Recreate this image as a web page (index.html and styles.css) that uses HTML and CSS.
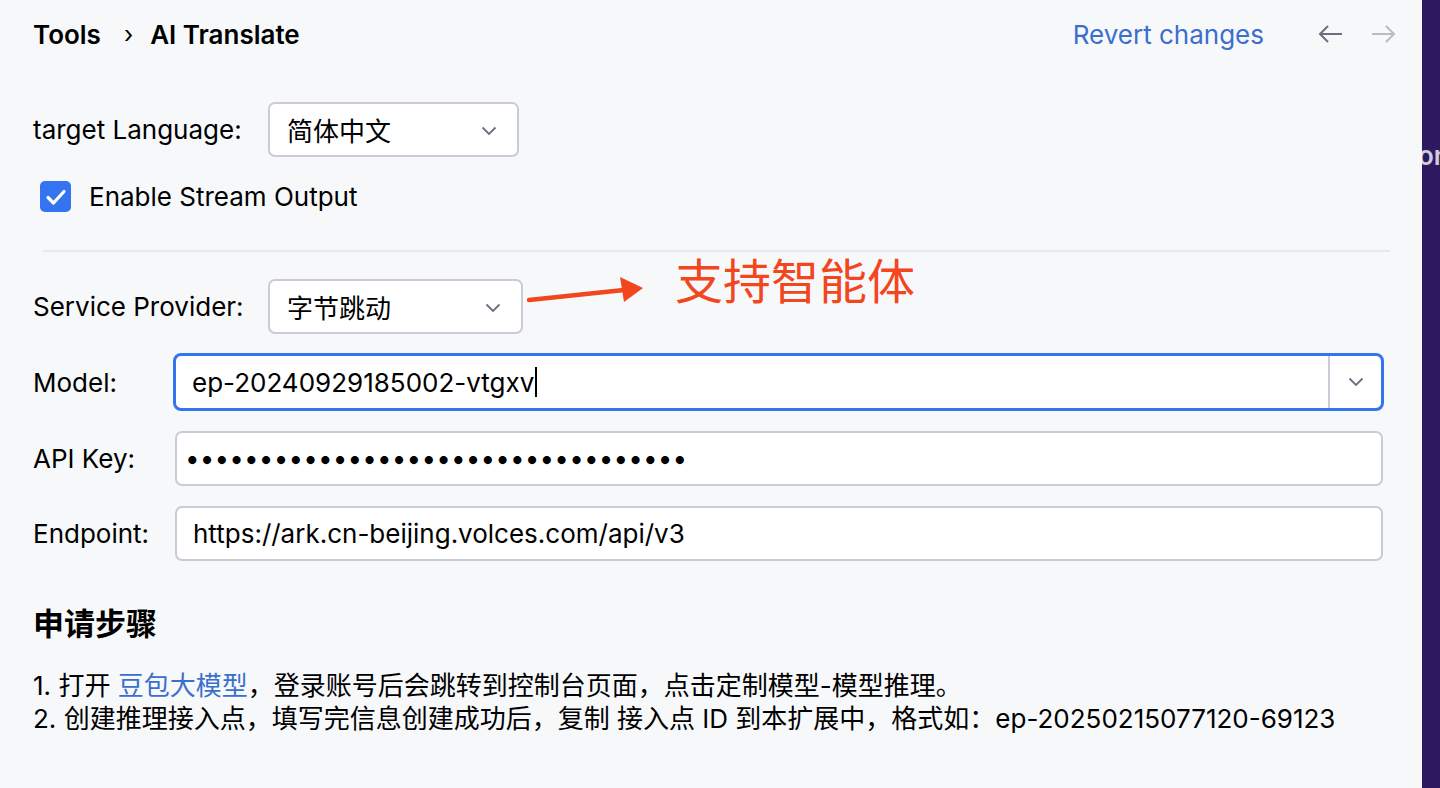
FILE: index.html
```html
<!DOCTYPE html>
<html lang="zh">
<head>
<meta charset="utf-8">
<title>AI Translate</title>
<link rel="stylesheet" href="styles.css">
</head>
<body>
<div class="app">
  <main class="panel">
    <header class="header">
      <nav class="crumbs">
        <span class="crumb">Tools</span>
        <span class="crumb-sep">›</span>
        <span class="crumb">AI Translate</span>
      </nav>
      <div class="header-right">
        <a class="revert">Revert changes</a>
        <svg class="nav-arrow" width="26" height="20" viewBox="0 0 26 20"><path d="M24 10H2M10 2L2 10l8 8" fill="none" stroke="#6c707e" stroke-width="2"/></svg>
        <svg class="nav-arrow" width="26" height="20" viewBox="0 0 26 20"><path d="M2 10h22M16 2l8 8-8 8" fill="none" stroke="#b9bcc3" stroke-width="2"/></svg>
      </div>
    </header>

    <section class="group">
      <div class="row row-lang">
        <label class="label label-wide">target Language:</label>
        <div class="select select-lang">
          <span>简体中文</span>
          <svg class="chev" width="16" height="10" viewBox="0 0 16 10"><path d="M1.5 1.5l6.5 6.5 6.5-6.5" fill="none" stroke="#6c707e" stroke-width="1.8"/></svg>
        </div>
      </div>
      <div class="row row-check">
        <span class="checkbox"><svg width="22" height="18" viewBox="0 0 22 18"><path d="M3 9.5l5.5 5.5L19 3.5" fill="none" stroke="#fff" stroke-width="3.2" stroke-linecap="round" stroke-linejoin="round"/></svg></span>
        <span class="check-label">Enable Stream Output</span>
      </div>
    </section>

    <hr class="sep">

    <section class="group">
      <div class="row row-provider">
        <label class="label label-wide">Service Provider:</label>
        <div class="select select-provider">
          <span>字节跳动</span>
          <svg class="chev" width="16" height="10" viewBox="0 0 16 10"><path d="M1.5 1.5l6.5 6.5 6.5-6.5" fill="none" stroke="#6c707e" stroke-width="1.8"/></svg>
        </div>
        <div class="note">
          <svg class="note-arrow" width="120" height="30" viewBox="0 0 120 30"><path d="M3 25L98 15" stroke="#f2461f" stroke-width="4.5" stroke-linecap="round"/><path d="M94 2L117 13 98 27z" fill="#f2461f"/></svg>
          <span class="note-text">支持智能体</span>
        </div>
      </div>
      <div class="row row-model">
        <label class="label label-narrow">Model:</label>
        <div class="combo">
          <span class="combo-value">ep-20240929185002-vtgxv<span class="caret"></span></span>
          <span class="combo-btn"><svg width="16" height="10" viewBox="0 0 16 10"><path d="M1.5 1.5l6.5 6.5 6.5-6.5" fill="none" stroke="#6c707e" stroke-width="1.8"/></svg></span>
        </div>
      </div>
      <div class="row row-field">
        <label class="label label-narrow">API Key:</label>
        <div class="input input-pass">••••••••••••••••••••••••••••••••••</div>
      </div>
      <div class="row row-field">
        <label class="label label-narrow">Endpoint:</label>
        <div class="input">https://ark.cn-beijing.volces.com/api/v3</div>
      </div>
    </section>

    <section class="steps">
      <h2 class="steps-title">申请步骤</h2>
      <p class="step">1. 打开 <a class="link">豆包大模型</a>，登录账号后会跳转到控制台页面，点击定制模型-模型推理。</p>
      <p class="step">2. 创建推理接入点，填写完信息创建成功后，复制 接入点 ID 到本扩展中，格式如：ep-20250215077120-69123</p>
    </section>
  </main>
  <aside class="side">
    <span class="side-text">on</span>
  </aside>
</div>
</body>
</html>
```

FILE: styles.css
```css
* { box-sizing: border-box; }
html, body { margin: 0; padding: 0; height: 100%; }
body {
  font-family: Inter, "Noto Sans CJK SC", sans-serif;
  color: #000;
  background: #f7f8fa;
  overflow: hidden;
}
.app {
  display: flex;
  height: 788px;
}
.panel {
  width: 1422px;
  flex: none;
  background: #f7f8fa;
  padding: 0 38px 0 33px;
}
.side {
  flex: 1;
  background: #2c1960;
  position: relative;
  overflow: hidden;
}
.side-text {
  position: absolute;
  left: -4px;
  top: 140px;
  font: 600 26px Inter, sans-serif;
  color: #cfcbd9;
}
.header {
  height: 68px;
  display: flex;
  align-items: center;
  justify-content: space-between;
}
.crumbs {
  display: flex;
  align-items: center;
  font-size: 26px;
  font-weight: 600;
}
.crumb-sep {
  font-weight: 400;
  margin: 0 17px 0 23px;
  font-size: 24px;
}
.header-right {
  display: flex;
  align-items: center;
  margin-right: -12px;
}
.revert {
  color: #3b6fce;
  font-size: 26px;
  margin-right: 54px;
}
.nav-arrow + .nav-arrow { margin-left: 26px; }

.group { display: flex; flex-direction: column; }
.row {
  display: flex;
  align-items: center;
  position: relative;
}
.label {
  font-size: 26px;
  color: #000;
  flex: none;
}
.label-wide { width: 235px; }
.label-narrow { width: 140px; }
.row-lang { margin-top: 34px; }
.select {
  height: 55px;
  background: #fff;
  border: 2px solid #c9ccd6;
  border-radius: 7px;
  display: flex;
  align-items: center;
  justify-content: space-between;
  padding: 0 20px 0 17px;
  font-size: 26px;
}
.select-lang { width: 251px; }
.select-provider { width: 255px; }
.chev { margin-top: 2px; }

.row-check { margin-top: 24px; padding-left: 7px; }
.checkbox {
  width: 31px;
  height: 31px;
  border-radius: 5px;
  background: #3574f0;
  display: flex;
  align-items: center;
  justify-content: center;
  margin-right: 18px;
}
.check-label { font-size: 26px; }

.sep {
  border: 0;
  border-top: 2px solid #e7e8ec;
  margin: 38px -6px 27px 10px;
}

.note {
  position: absolute;
  left: 493px;
  top: -36px;
  display: flex;
  align-items: flex-start;
}
.note-arrow { margin-top: 32px; flex: none; }
.note-text {
  color: #f2461f;
  font-size: 48px;
  margin-left: 29px;
  white-space: nowrap;
  font-family: "Noto Sans CJK SC", sans-serif;
}

.row-model { margin-top: 19px; }
.combo {
  flex: 1;
  height: 58px;
  background: #fff;
  border: 3px solid #3574f0;
  border-radius: 8px;
  display: flex;
  align-items: stretch;
}
.combo-value {
  flex: 1;
  display: flex;
  align-items: center;
  padding-left: 16px;
  font-size: 26px;
}
.caret {
  display: inline-block;
  width: 2px;
  height: 30px;
  background: #000;
  margin-left: 1px;
}
.combo-btn {
  width: 53px;
  border-left: 2px solid #c9ccd6;
  display: flex;
  align-items: center;
  justify-content: center;
}
.row-field { margin-top: 20px; }
.row-field + .row-field { margin-top: 20px; }
.input {
  flex: 1;
  height: 55px;
  margin-left: 2px;
  margin-right: 1px;
  background: #fff;
  border: 2px solid #c9ccd6;
  border-radius: 7px;
  display: flex;
  align-items: center;
  padding-left: 16px;
  font-size: 26px;
}
.input-pass {
  padding-left: 8px;
  letter-spacing: 0.15px;
}

.steps { margin-top: 39px; }
.steps-title {
  margin: 0 0 21px;
  font-size: 31px;
  font-weight: 700;
  line-height: 48px;
}
.step {
  margin: 0;
  font-size: 26px;
  line-height: 33px;
}
.link { color: #3b6fce; }
```
